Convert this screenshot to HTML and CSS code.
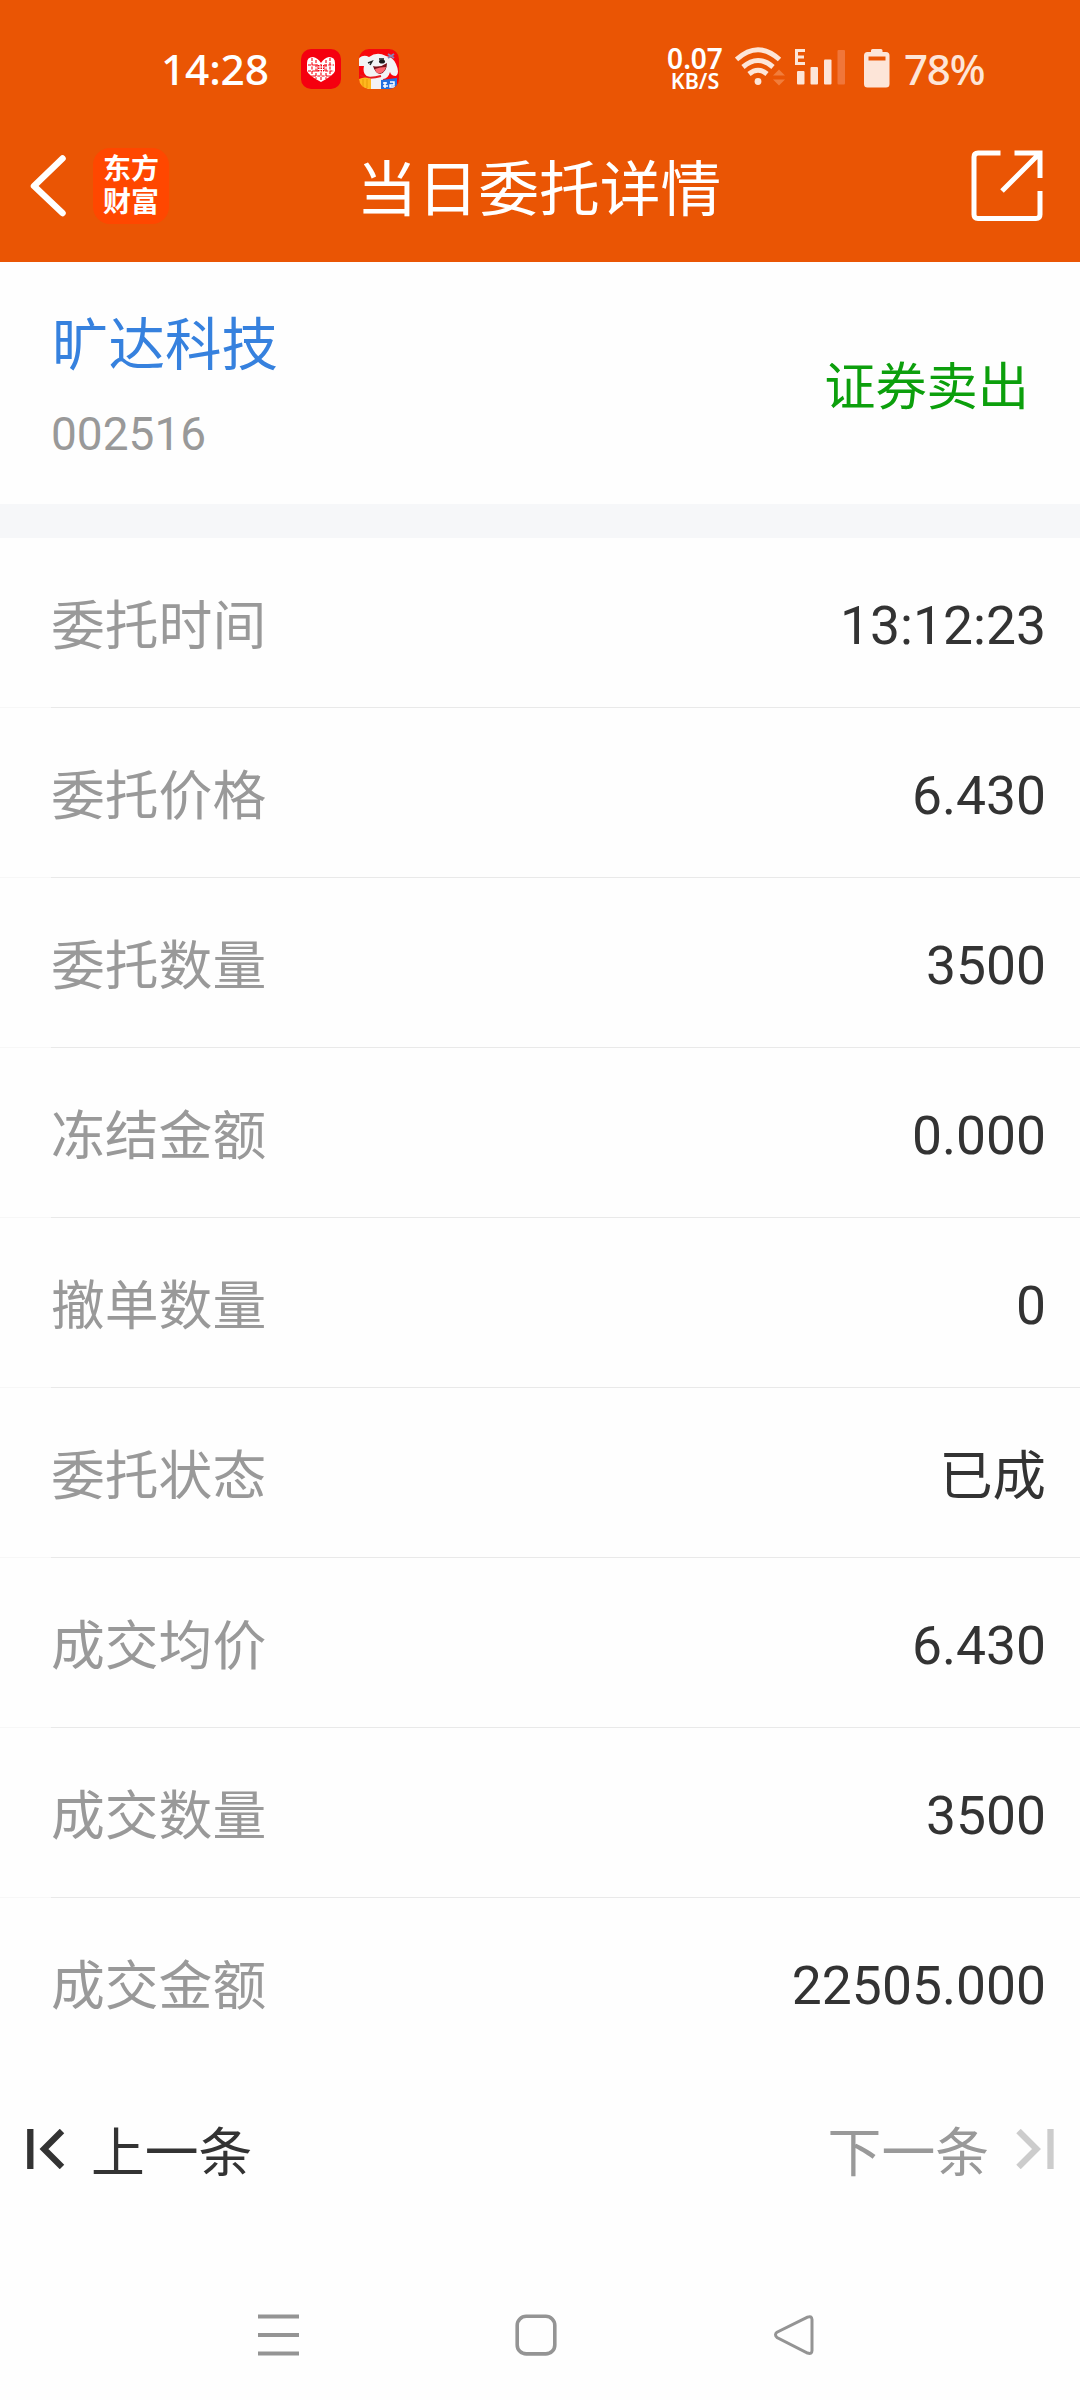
FILE: index.html
```html
<!DOCTYPE html>
<html lang="zh-CN">
<head>
<meta charset="utf-8">
<title>当日委托详情</title>
<link rel="stylesheet" href="styles.css">
</head>
<body>
<header class="header">
  <div class="status">
    <span class="clock">14:28</span>
    <svg class="app-icon" width="40" height="40" viewBox="0 0 40 40">
      <rect width="40" height="40" rx="10" fill="#f5000f"/>
      <path d="M6 14Q6 8 12 8Q17 9 20 14Q23 9 28 8Q34 8 34 14V22Q33 26 20 33Q7 26 6 22Z" fill="#fff"/>
      <path d="M11 9V28M15 11V30M25 11V30M29 9V28M20 15V32M7 16H17M23 16H33M7 22H33M12 27H28" stroke="#f5000f" stroke-width="1.1" stroke-dasharray="3 1.3" fill="none"/>
      <path d="M16.500 16H23.500V22H16.500Z" fill="#f5000f"/>
      <path d="M17 18H23M17 20.500H23M19 16V23M21.500 16V23" stroke="#fff" stroke-width="1"/>
    </svg>
    <svg class="app-icon dog" width="40" height="40" viewBox="0 0 40 40">
      <defs><clipPath id="tile"><rect width="40" height="40" rx="10"/></clipPath></defs>
      <g clip-path="url(#tile)">
        <rect width="40" height="40" fill="#f8060d"/>
        <path d="M0 9Q5 5 10 8Q18 2 27 7Q34 8 37 15Q41 24 37 27Q32 27 31 23Q29 30 24 30L26 40H8L10 28Q3 26 5 17L0 17Z" fill="#f3f3f5"/>
        <path d="M9 14L13 12.500L11 16M20 10L25 10" stroke="#222" stroke-width="1.500" fill="none"/>
        <ellipse cx="23" cy="12.500" rx="3" ry="2" fill="#191919"/>
        <path d="M14 17Q21 19 28 14Q28 23 21 25Q16 24 14 17Z" fill="#7a1018"/>
        <path d="M16 20Q21 18 27 18Q25 24 20 24.500Q17 24 16 20Z" fill="#ff6870"/>
        <path d="M1 26Q9 31 22 27" stroke="#e51a20" stroke-width="2" fill="none"/>
        <path d="M29 5L35 9M35 5L29 9" stroke="#8a83b5" stroke-width="2"/>
        <path d="M0 30Q6 27 12 30V40H0Z" fill="#ffb71e"/>
        <path d="M4 30V40M8 30V40" stroke="#e99b08" stroke-width="1"/>
        <path d="M22 31L38 29V40H22Z" fill="#2272e0"/>
        <path d="M24 34H28M24 37H29M26 33V39M31 33H35V36H31V38H36" stroke="#fff" stroke-width="1.500" fill="none"/>
      </g>
    </svg>
    <div class="speed"><span class="rate">0.07</span><span class="unit">KB/S</span></div>
    <svg class="wifi" width="50" height="40" viewBox="0 0 50 40">
      <g fill="none" stroke="#fde5d8" stroke-width="5">
        <path d="M1.500 12.500Q23 -7 44.500 12.500"/>
        <path d="M8 20Q23 7 38 20"/>
        <path d="M14 27Q23 19.500 32 27"/>
      </g>
      <circle cx="23" cy="34.500" r="3.400" fill="#fde5d8"/>
      <path d="M38 28.500L44 22.500L50 28.500ZM38 32.500H50L44 38.500Z" fill="#f17d3b"/>
    </svg>
    <svg class="signal" width="52" height="37" viewBox="0 0 52 37">
      <path d="M11 2.500H2.500V15.500H11M2.500 9H10" fill="none" stroke="#fde5d8" stroke-width="3"/>
      <g fill="#fde5d8"><rect x="3" y="23" width="7.500" height="13.500" rx="1"/><rect x="16.500" y="19" width="7.500" height="17.500" rx="1"/><rect x="30" y="11.500" width="7.500" height="25" rx="1"/></g>
      <rect x="43.500" y="2" width="7.500" height="34.500" rx="1" fill="#f0763a"/>
    </svg>
    <svg class="battery" width="26" height="39" viewBox="0 0 26 39">
      <path fill-rule="evenodd" d="M7 3V1.500Q7 0 8.500 0H17Q18.500 0 18.500 1.500V3H22Q25.500 3 25.500 6.500V35Q25.500 38.500 22 38.500H3.500Q0 38.500 0 35V6.500Q0 3 3.500 3ZM4.500 7.500V11.500H21.500V7.500Z" fill="#fde5d8"/>
    </svg>
    <span class="percent">78%</span>
  </div>
  <nav class="titlebar">
    <div class="left">
      <svg width="36" height="62" viewBox="0 0 36 62"><path d="M32.500 3.500L4 31L32.500 58" fill="none" stroke="#fff" stroke-width="6.500" stroke-linecap="round" stroke-linejoin="round"/></svg>
      <div class="logo"><span>东方</span><span>财富</span></div>
    </div>
    <h1>当日委托详情</h1>
    <svg class="share" width="72" height="72" viewBox="0 0 72 72"><path d="M29.500 3H7Q3 3 3 7V64.500Q3 68.500 7 68.500H65Q69 68.500 69 64.500V41M43.500 3H69V28M68 4L31 41" fill="none" stroke="#fff" stroke-width="5"/></svg>
  </nav>
</header>
<section class="stock">
  <div>
    <div class="name">旷达科技</div>
    <div class="code">002516</div>
  </div>
  <div class="side">证券卖出</div>
</section>
<main class="rows">
  <div class="row"><span>委托时间</span><b>13:12:23</b></div>
  <div class="row"><span>委托价格</span><b>6.430</b></div>
  <div class="row"><span>委托数量</span><b>3500</b></div>
  <div class="row"><span>冻结金额</span><b>0.000</b></div>
  <div class="row"><span>撤单数量</span><b>0</b></div>
  <div class="row"><span>委托状态</span><b class="cjk">已成</b></div>
  <div class="row"><span>成交均价</span><b>6.430</b></div>
  <div class="row"><span>成交数量</span><b>3500</b></div>
  <div class="row"><span>成交金额</span><b>22505.000</b></div>
</main>
<div class="pager">
  <div class="prev"><svg width="38" height="40" viewBox="0 0 38 40"><path d="M3.300 0V40M35 2L17 20L35 38" fill="none" stroke="#333" stroke-width="6.300"/></svg><span>上一条</span></div>
  <div class="next"><span>下一条</span><svg width="38" height="40" viewBox="0 0 38 40"><path d="M34.500 0V40M2.500 2L20.500 20L2.500 38" fill="none" stroke="#ccc" stroke-width="6.300"/></svg></div>
</div>
<footer class="system">
  <svg width="42" height="42" viewBox="0 0 42 42"><path d="M1 2.500H42M1 21H42M1 39.500H42" stroke="#949494" stroke-width="3.800"/></svg>
  <svg width="42" height="42" viewBox="0 0 42 42"><rect x="2.200" y="2.300" width="37.600" height="37.600" rx="9" fill="none" stroke="#949494" stroke-width="3.600"/></svg>
  <svg width="42" height="42" viewBox="0 0 42 42"><path d="M34.500 3.200L4 18.200Q1 20.700 4 23.500L34.500 39Q39 40.500 39 36.500V5.500Q38.700 1.500 34.500 3.200Z" fill="none" stroke="#949494" stroke-width="3"/></svg>
</footer>
</body>
</html>
```

FILE: styles.css
```css
* { box-sizing: border-box; }
body {
  margin: 0;
  width: 1080px;
  height: 2400px;
  background: #fefefe;
  color: #333;
  font-family: Roboto, "Noto Sans CJK SC", sans-serif;
  overflow: hidden;
}
svg { display: block; flex: none; }
.header { height: 262px; background: #ea5504; color: #fff; }
.status {
  height: 110px;
  padding: 28px 0 0 161px;
  display: flex;
  align-items: center;
  font-family: "Noto Sans", sans-serif;
  white-space: nowrap;
}
.clock { width: 140px; font-size: 42.500px; line-height: 60px; letter-spacing: -0.200px; font-weight: 500; }
.app-icon { margin-right: 18px; }
.speed {
  width: 60px;
  margin-left: 248px;
  display: flex;
  flex-direction: column;
  align-items: center;
  font-weight: 600;
}
.rate { font-size: 28px; line-height: 23px; }
.unit { font-size: 21.500px; line-height: 21px; }
.wifi { margin-left: 10px; margin-top: -4px; }
.signal { margin-left: 9px; margin-top: -5px; }
.battery { margin-left: 18px; margin-top: -2px; }
.percent { margin-left: 14px; color: #fde5d8; font-size: 42px; line-height: 60px; letter-spacing: -1.200px; font-weight: 500; }
.titlebar {
  height: 152px;
  padding: 0 37px 0 30px;
  display: grid;
  grid-template-columns: 1fr auto 1fr;
  align-items: center;
}
.left { display: flex; align-items: center; gap: 27px; }
.logo {
  width: 76px;
  height: 76px;
  padding-bottom: 5px;
  border-radius: 17px;
  background: #ff4700;
  display: flex;
  flex-direction: column;
  align-items: center;
  justify-content: center;
  font: 700 28px/33px "Noto Sans CJK SC", sans-serif;
}
h1 { margin: 0 0 0 5px; font: 400 60.800px/90px "Noto Sans CJK SC", sans-serif; padding-bottom: 2px; }
.share { justify-self: end; }
.stock {
  height: 276px;
  padding: 0 51px 0 52px;
  border-bottom: 34px solid #f6f7f9;
  display: flex;
  align-items: center;
  justify-content: space-between;
}
.name { color: #3681de; font: 400 56.500px/84px "Noto Sans CJK SC", sans-serif; }
.code { color: #999; font-size: 46px; line-height: 64px; margin: 20px 0 3px -1px; }
.side { color: #0c9f0c; font: 400 51.200px/76px "Noto Sans CJK SC", sans-serif; padding-bottom: 1px; }
.row {
  height: 170px;
  padding: 0 34px 0 51px;
  display: flex;
  align-items: center;
  justify-content: space-between;
  font-size: 53.400px;
  background: linear-gradient(90deg, #f7f7f7 51px, #e9e9e9 51px) bottom / 100% 1px no-repeat;
}
.row:last-child { background: none; }
.row span { color: #999; font-size: 53.800px; font-family: "Noto Sans CJK SC", sans-serif; padding-bottom: 3px; }
.row b { font-weight: 400; line-height: 64px; padding-top: 5px; }
.row .cjk { padding-top: 7px; }
.pager {
  height: 162px;
  padding: 0 26px 0 27px;
  display: flex;
  align-items: center;
  justify-content: space-between;
  font: 400 53.800px/80px "Noto Sans CJK SC", sans-serif;
}
.prev, .next { display: flex; align-items: center; gap: 27px; }
.prev { gap: 26px; }
.next { color: #999; }
.system {
  padding: 84px 265px 0 257px;
  display: flex;
  justify-content: space-between;
}
```
